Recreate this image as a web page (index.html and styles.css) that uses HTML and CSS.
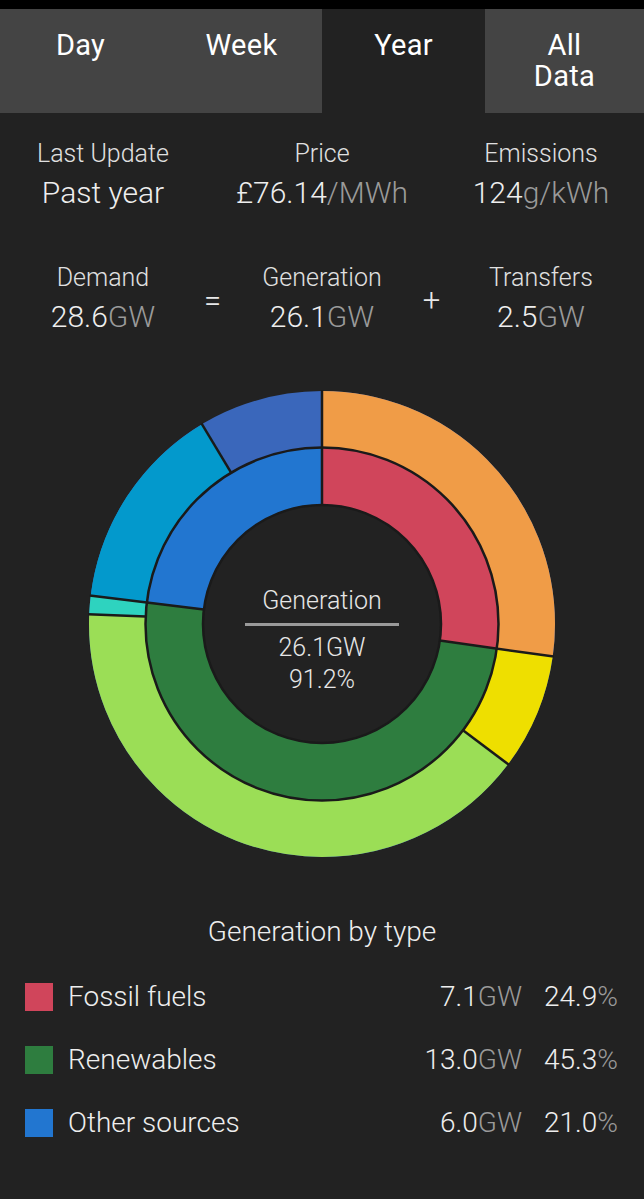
FILE: index.html
```html
<!DOCTYPE html>
<html lang="en">
<head>
<meta charset="utf-8">
<title>Grid</title>
<link rel="stylesheet" href="styles.css">
</head>
<body>
<div class="topbar"></div>
<nav class="tabs">
  <div class="tab">Day</div>
  <div class="tab">Week</div>
  <div class="tab active">Year</div>
  <div class="tab"><span class="tab-line">All</span><span class="tab-line">Data</span></div>
</nav>

<section class="stats">
  <div class="stat col1">
    <div class="label">Last Update</div>
    <div class="value">Past year</div>
  </div>
  <div class="stat col3">
    <div class="label">Price</div>
    <div class="value">£76.14<span class="unit">/MWh</span></div>
  </div>
  <div class="stat col5">
    <div class="label">Emissions</div>
    <div class="value">124<span class="unit">g/kWh</span></div>
  </div>
</section>

<section class="stats stats-balance">
  <div class="stat col1">
    <div class="label">Demand</div>
    <div class="value">28.6<span class="unit">GW</span></div>
  </div>
  <div class="op col2">=</div>
  <div class="stat col3">
    <div class="label">Generation</div>
    <div class="value">26.1<span class="unit">GW</span></div>
  </div>
  <div class="op col4">+</div>
  <div class="stat col5">
    <div class="label">Transfers</div>
    <div class="value">2.5<span class="unit">GW</span></div>
  </div>
</section>

<section class="chart">
  <svg class="donut" width="480" height="480" viewBox="0 0 480 480">
    <g transform="rotate(-90 240 240)" fill="none">
      <!-- inner ring: r 119..176.5 -->
      <circle cx="240" cy="240" r="147.75" stroke-width="57.5" stroke="#2276d0"/>
      <circle cx="240" cy="240" r="147.75" stroke-width="57.5" pathLength="360" stroke="#d0455b" stroke-dasharray="98.3 261.7" stroke-dashoffset="0"/>
      <circle cx="240" cy="240" r="147.75" stroke-width="57.5" pathLength="360" stroke="#2e7d3f" stroke-dasharray="179.3 180.7" stroke-dashoffset="-98"/>
      <!-- outer ring: r 176.5..233 -->
      <circle cx="240" cy="240" r="204.75" stroke-width="56.5" stroke="#3a67bb"/>
      <circle cx="240" cy="240" r="204.75" stroke-width="56.5" pathLength="360" stroke="#f09c47" stroke-dasharray="98.3 261.7" stroke-dashoffset="0"/>
      <circle cx="240" cy="240" r="204.75" stroke-width="56.5" pathLength="360" stroke="#eedf00" stroke-dasharray="29.3 330.7" stroke-dashoffset="-98"/>
      <circle cx="240" cy="240" r="204.75" stroke-width="56.5" pathLength="360" stroke="#9bde56" stroke-dasharray="145.7 214.3" stroke-dashoffset="-127"/>
      <circle cx="240" cy="240" r="204.75" stroke-width="56.5" pathLength="360" stroke="#2ed3bf" stroke-dasharray="4.9 355.1" stroke-dashoffset="-272.4"/>
      <circle cx="240" cy="240" r="204.75" stroke-width="56.5" pathLength="360" stroke="#0399cc" stroke-dasharray="52.3 307.7" stroke-dashoffset="-277"/>
    </g>
    <g class="sep" fill="none" stroke="#1a1a1a" stroke-width="2.5">
      <circle cx="240" cy="240" r="119"/>
      <circle cx="240" cy="240" r="176.5"/>
      <line x1="240" y1="121" x2="240" y2="6" transform="rotate(0 240 240)"/>
      <line x1="240" y1="121" x2="240" y2="6" transform="rotate(98 240 240)"/>
      <line x1="240" y1="121" x2="240" y2="6" transform="rotate(277 240 240)"/>
      <line x1="240" y1="63.5" x2="240" y2="6" transform="rotate(127 240 240)"/>
      <line x1="240" y1="63.5" x2="240" y2="6" transform="rotate(272.4 240 240)"/>
      <line x1="240" y1="63.5" x2="240" y2="6" transform="rotate(329 240 240)"/>
    </g>
  </svg>
  <div class="center-label">
    <div class="center-title">Generation</div>
    <div class="center-rule"></div>
    <div class="center-value">26.1GW</div>
    <div class="center-value">91.2%</div>
  </div>
</section>

<h2 class="legend-title">Generation by type</h2>
<ul class="legend">
  <li class="legend-row">
    <span class="swatch swatch-fossil"></span>
    <span class="legend-name">Fossil fuels</span>
    <span class="legend-gw">7.1<span class="unit">GW</span></span>
    <span class="legend-pct">24.9<span class="unit">%</span></span>
  </li>
  <li class="legend-row">
    <span class="swatch swatch-renew"></span>
    <span class="legend-name">Renewables</span>
    <span class="legend-gw">13.0<span class="unit">GW</span></span>
    <span class="legend-pct">45.3<span class="unit">%</span></span>
  </li>
  <li class="legend-row">
    <span class="swatch swatch-other"></span>
    <span class="legend-name">Other sources</span>
    <span class="legend-gw">6.0<span class="unit">GW</span></span>
    <span class="legend-pct">21.0<span class="unit">%</span></span>
  </li>
</ul>
</body>
</html>
```
FILE: styles.css
```css
* { box-sizing: border-box; }

html, body {
  margin: 0;
  padding: 0;
  background: #222222;
  color: #eeeeee;
  font-family: Roboto, "Noto Sans", "Liberation Sans", sans-serif;
}

.topbar {
  height: 9px;
  background: #000;
}

.tabs {
  display: grid;
  grid-template-columns: 161px 161px 163px 159px;
}

.tab {
  display: flex;
  flex-direction: column;
  align-items: center;
  height: 104px;
  padding-top: 21px;
  background: #444444;
  color: #ffffff;
  font-size: 29px;
  line-height: 31px;
  letter-spacing: 0.3px;
  font-weight: 400;
}

.tab-line {
  display: block;
  height: 31px;
}

.tab.active {
  background: #222222;
}

.stats {
  display: grid;
  grid-template-columns: 180px 39px 180px 39px 180px;
  justify-content: center;
  padding-top: 27px;
  text-align: center;
}

.stats-balance {
  padding-top: 54px;
}

.col1 { grid-column: 1; }
.col2 { grid-column: 2; }
.col3 { grid-column: 3; }
.col4 { grid-column: 4; }
.col5 { grid-column: 5; }

.label {
  font-size: 25px;
  line-height: 28px;
  font-weight: 300;
  color: #e0e0e0;
  white-space: nowrap;
}

.value {
  margin-top: 8px;
  font-size: 30px;
  line-height: 34px;
  font-weight: 300;
  color: #eeeeee;
  white-space: nowrap;
}

.unit {
  color: #9a9a9a;
}

.op {
  align-self: center;
  padding-top: 2px;
  font-size: 31px;
  font-weight: 300;
  color: #e8e8e8;
}

.chart {
  position: relative;
  width: 480px;
  height: 480px;
  margin: 50px auto 0;
}

.donut {
  display: block;
}

.center-label {
  position: absolute;
  left: 0;
  right: 0;
  top: 202px;
  display: flex;
  flex-direction: column;
  align-items: center;
  color: #e6e6e6;
  font-size: 25px;
  font-weight: 300;
}

.center-title {
  line-height: 30px;
}

.center-rule {
  width: 154px;
  height: 3px;
  background: #9a9a9a;
  margin: 7px 0 6px;
}

.center-value {
  line-height: 32px;
}

.legend-title {
  margin: 53px 0 0;
  font-size: 28px;
  line-height: 30px;
  font-weight: 300;
  text-align: center;
  color: #eeeeee;
}

.legend {
  list-style: none;
  margin: 18px 0 0;
  padding: 0 26px 0 25px;
}

.legend-row {
  display: grid;
  grid-template-columns: 28px 1fr auto 96px;
  align-items: center;
  height: 63px;
  font-size: 28px;
  font-weight: 300;
}

.swatch {
  width: 28px;
  height: 28px;
}

.swatch-fossil { background: #d0455b; }
.swatch-renew { background: #2e7d3f; }
.swatch-other { background: #2276d0; }

.legend-name {
  padding-left: 15px;
  color: #eeeeee;
}

.legend-gw,
.legend-pct {
  text-align: right;
}

.legend-gw .unit,
.legend-pct .unit {
  color: #9a9a9a;
}
```
